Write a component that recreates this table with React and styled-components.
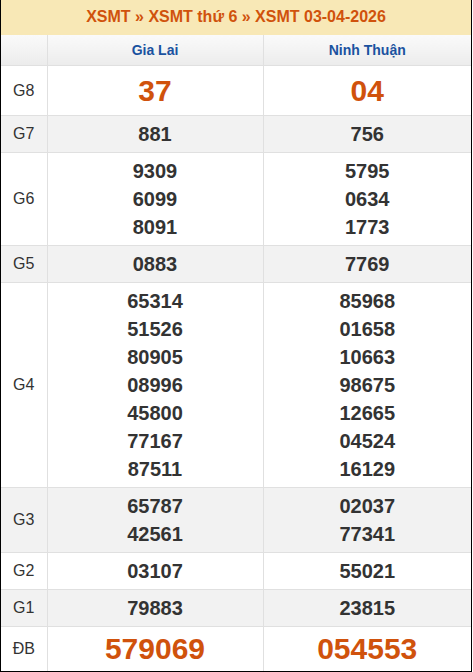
import styled, { createGlobalStyle } from "styled-components";

const results = [
  { label: "G8", gl: ["37"], nt: ["04"], big: true, h: 49 },
  { label: "G7", gl: ["881"], nt: ["756"], shade: true },
  { label: "G6", gl: ["9309", "6099", "8091"], nt: ["5795", "0634", "1773"] },
  { label: "G5", gl: ["0883"], nt: ["7769"], shade: true },
  {
    label: "G4",
    gl: ["65314", "51526", "80905", "08996", "45800", "77167", "87511"],
    nt: ["85968", "01658", "10663", "98675", "12665", "04524", "16129"],
  },
  { label: "G3", gl: ["65787", "42561"], nt: ["02037", "77341"], shade: true },
  { label: "G2", gl: ["03107"], nt: ["55021"] },
  { label: "G1", gl: ["79883"], nt: ["23815"], shade: true },
  { label: "ĐB", gl: ["579069"], nt: ["054553"], big: true, h: 44 },
];

const App = () => {
  return (
    <>
      <Global />
      <Wrapper>
        <Title>XSMT » XSMT thứ 6 » XSMT 03-04-2026</Title>
        <Table>
          <colgroup>
            <col style={{ width: 46 }} />
            <col style={{ width: 216 }} />
            <col />
          </colgroup>
          <thead>
            <tr>
              <HeadCell />
              <HeadCell>Gia Lai</HeadCell>
              <HeadCell>Ninh Thuận</HeadCell>
            </tr>
          </thead>
          <tbody>
            {results.map((row) => (
              <Row key={row.label} $shade={row.shade}>
                <Label>{row.label}</Label>
                {[row.gl, row.nt].map((nums, i) => (
                  <NumCell key={i} $h={row.h}>
                    {nums.map((n) => (
                      <Num key={n} $big={row.big}>
                        {n}
                      </Num>
                    ))}
                  </NumCell>
                ))}
              </Row>
            ))}
          </tbody>
        </Table>
      </Wrapper>
    </>
  );
};

export default App;

const Global = createGlobalStyle`
  body {
    margin: 0;
    background: #fff;
    font-family: "Liberation Sans", Arial, sans-serif;
  }
`;

const Wrapper = styled.div`
  width: 470px;
  border: 1px solid #000;
  border-top: none;
`;

const Title = styled.div`
  height: 35px;
  line-height: 33px;
  background: #f8e8b6;
  color: #d0520c;
  font-size: 16px;
  font-weight: bold;
  text-align: center;
`;

const Table = styled.table`
  width: 100%;
  border-collapse: collapse;
  table-layout: fixed;
  td,
  th {
    border: 1px solid #e0e0e0;
    padding: 0;
  }
  tr:first-child th {
    border-top: none;
  }
  tr td:first-child,
  tr th:first-child {
    border-left: none;
  }
  tr td:last-child,
  tr th:last-child {
    border-right: none;
  }
  tbody tr:last-child td {
    border-bottom: none;
  }
`;

const HeadCell = styled.th`
  height: 30px;
  background: linear-gradient(#fafafa, #ececec);
  color: #1a52a0;
  font-size: 14px;
  font-weight: bold;
  text-align: center;
`;

const Row = styled.tr`
  background: ${(p) => (p.$shade ? "#f2f2f2" : "#fff")};
`;

const Label = styled.td`
  color: #333;
  font-size: 16px;
  font-weight: normal;
  text-align: center;
`;

const NumCell = styled.td`
  height: ${(p) => (p.$h ? `${p.$h}px` : "auto")};
  padding: ${(p) => (p.$h ? "0" : "4px 0")} !important;
  text-align: center;
`;

const Num = styled.div`
  line-height: 28px;
  font-size: ${(p) => (p.$big ? "30px" : "20px")};
  font-weight: bold;
  color: ${(p) => (p.$big ? "#d0520c" : "#333")};
`;
